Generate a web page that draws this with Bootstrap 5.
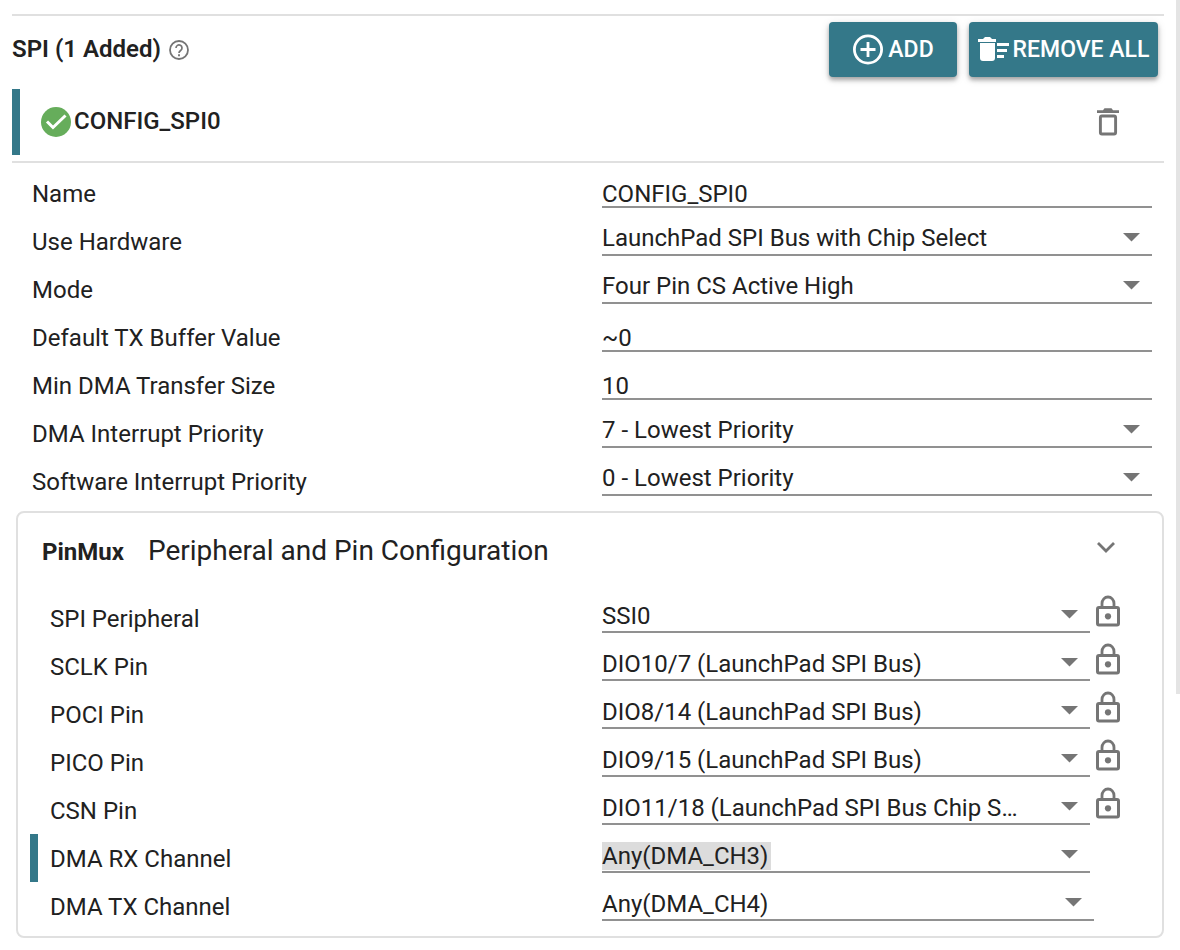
<!DOCTYPE html>
<html lang="en">
<head>
<meta charset="utf-8">
<meta name="viewport" content="width=device-width, initial-scale=1">
<title>SPI configuration</title>
<link href="https://cdn.jsdelivr.net/npm/bootstrap@5.3.0/dist/css/bootstrap.min.css" rel="stylesheet">
<style>
  :root { --teal: #347889; --rule: #e0e0e0; --line: #919191; --glyph: #757575; --ink: #212121; }
  body { font-family: Roboto, "Liberation Sans", sans-serif; font-size: 24px; line-height: 28px; color: var(--ink); background: #fff; }
  .page { padding: 14px 16px 12px 12px; }
  .scroll-thumb { width: 4px; height: 73vh; background: #e4e4e4; }
  .module-head { border-top: 2px solid var(--rule); padding: 6px 6px 12px 0; }
  .module-head h1 { font-size: 24px; line-height: 28px; font-weight: 600; padding-bottom: 2px; }
  .btn-teal { --bs-btn-color: #fff; --bs-btn-bg: var(--teal); --bs-btn-border-width: 0; --bs-btn-hover-color: #fff; --bs-btn-hover-bg: #2b6675; --bs-btn-active-bg: #2b6675; --bs-btn-active-color: #fff;
    --bs-btn-font-size: 23px; --bs-btn-font-weight: 500; --bs-btn-line-height: 28px; --bs-btn-border-radius: 4px; --bs-btn-padding-x: 6px;
    height: 55px; box-shadow: 0 3px 4px rgba(0,0,0,.3), 0 2px 10px rgba(0,0,0,.12); }
  .btn-add { width: 128px; }
  .btn-remove { width: 189px; }
  .head-actions { gap: 12px; }
  .icon-btn { background: none; border: 0; padding: 0; color: var(--glyph); }
  .icon-btn svg, .btn-teal svg { display: block; }
  .instance { border-bottom: 2px solid var(--rule); padding-bottom: 6px; }
  .instance-body { border-left: 8px solid var(--teal); height: 66px; padding: 0 44px 0 20px; }
  .instance h2 { font-size: 24px; line-height: 28px; font-weight: 500; padding: 0 0 2px 2px; }
  .settings { padding: 7px 12px 5px 20px; }
  .setting { min-height: 48px; }
  .value { padding-left: 10px; padding-bottom: 10px; }
  .field { width: 100%; border: 0; border-bottom: 2px solid var(--line); border-radius: 0; background-color: transparent; color: var(--ink); padding: 0; height: 26px; line-height: 24px; outline: 0; }
  select.field { appearance: none; height: 32px; line-height: 28px; padding: 0 64px 2px 0; text-overflow: ellipsis; white-space: nowrap; overflow: hidden;
    background: url("data:image/svg+xml,%3Csvg xmlns='http://www.w3.org/2000/svg' width='17' height='9'%3E%3Cpath d='M0 0h17L8.500 8.500z' fill='%23757575'/%3E%3C/svg%3E") no-repeat right 12px bottom 12px; }
  .pinmux { border: 2px solid var(--rule); border-radius: 8px; margin-left: 4px; padding: 0 0 6px 12px; }
  .pinmux-head { height: 81px; padding: 0 46px 6px 12px; }
  .pinmux-head h2 { font-size: 24px; line-height: 28px; font-weight: 700; }
  .pinmux-head p { font-size: 28px; line-height: 32px; }
  .pinmux .setting { border-left: 8px solid transparent; padding: 0 28px 0 12px; }
  .pinmux .setting.changed { border-left-color: var(--teal); }
  .pinmux label { padding-top: 2px; }
  .pinmux .value { padding-bottom: 9px; }
  .pinmux select.field { height: 31px; padding-bottom: 1px; }
  .lock-slot { width: 44px; padding-left: 6px; }
  .slot-narrow { width: 40px; }
  .changed .value { position: relative; }
  .picked { width: 169px; height: 28px; left: 10px; bottom: 12px; z-index: -1; background: #dcdcdc; }
</style>
</head>
<body>
<svg class="d-none" aria-hidden="true">
  <symbol id="lock" viewBox="0 0 24 32"><rect x="1.500" y="12.500" width="21" height="17.500" rx="1.500" fill="none" stroke="currentColor" stroke-width="3"/><path d="M6 12V8.500a6 6.500 0 0 1 12 0V12" fill="none" stroke="currentColor" stroke-width="2.800"/><circle cx="12" cy="21.300" r="3.100" fill="currentColor"/></symbol>
</svg>
<div class="scroll-thumb position-fixed top-0 end-0"></div>
<main class="page">
  <header class="module-head d-flex align-items-center">
    <h1 class="mb-0">SPI (1 Added)</h1>
    <button class="icon-btn ms-2" type="button" aria-label="Help">
      <svg width="20" height="20" viewBox="0 0 20 20" fill="none" stroke="currentColor"><circle cx="10" cy="10" r="9" stroke-width="1.800"/><path d="M7 8a3 3 0 1 1 4.600 2.500C10.500 11.300 10 11.800 10 13" stroke-width="1.700"/><path d="M10 14.300v1.900" stroke-width="1.900"/></svg>
    </button>
    <div class="head-actions d-flex ms-auto">
      <button class="btn btn-teal btn-add d-flex align-items-center justify-content-center" type="button">
        <svg class="me-1" width="32" height="32" viewBox="0 0 32 32" fill="none" stroke="#fff" stroke-width="2.800"><circle cx="16" cy="15.500" r="13.600"/><path d="M16 8v15M8.500 15.500h15"/></svg>ADD
      </button>
      <button class="btn btn-teal btn-remove d-flex align-items-center justify-content-center" type="button">
        <svg class="me-1" width="31" height="26" viewBox="0 0 31 26" fill="#fff"><path d="M0 2h5l2-2h5l2 2h4v3H0zM2 6h15v15q0 3-3 3H5q-3 0-3-3zM19 6h12v3H19zM19 12h10v3H19zM19 18h7v3h-7z"/></svg>REMOVE ALL
      </button>
    </div>
  </header>

  <section class="instance">
    <div class="instance-body d-flex align-items-center">
      <svg class="flex-shrink-0" width="32" height="32" viewBox="0 0 32 32"><circle cx="16" cy="16" r="15" fill="#66ad5b"/><path d="M7 15.500l6 6L25.500 9.500" fill="none" stroke="#fff" stroke-width="3"/></svg>
      <h2 class="mb-0">CONFIG_SPI0</h2>
      <button class="icon-btn ms-auto" type="button" aria-label="Remove CONFIG_SPI0">
        <svg width="24" height="28" viewBox="0 0 24 28"><path d="M1 2.300h6L8.500.3h7l1.500 2h6v2.700H1z" fill="currentColor"/><rect x="4.400" y="8" width="15.200" height="18" rx="1.500" fill="none" stroke="currentColor" stroke-width="2.900"/></svg>
      </button>
    </div>
  </section>

  <form>
    <div class="settings">
      <div class="setting row g-0"><label class="col-6 align-self-center" for="name">Name</label><div class="col-6 value d-flex align-items-end"><input class="field" id="name" type="text" value="CONFIG_SPI0"></div></div>
      <div class="setting row g-0"><label class="col-6 align-self-center" for="hw">Use Hardware</label><div class="col-6 value d-flex align-items-end"><select class="field" id="hw"><option>LaunchPad SPI Bus with Chip Select</option></select></div></div>
      <div class="setting row g-0"><label class="col-6 align-self-center" for="mode">Mode</label><div class="col-6 value d-flex align-items-end"><select class="field" id="mode"><option>Four Pin CS Active High</option></select></div></div>
      <div class="setting row g-0"><label class="col-6 align-self-center" for="txbuf">Default TX Buffer Value</label><div class="col-6 value d-flex align-items-end"><input class="field" id="txbuf" type="text" value="~0"></div></div>
      <div class="setting row g-0"><label class="col-6 align-self-center" for="mindma">Min DMA Transfer Size</label><div class="col-6 value d-flex align-items-end"><input class="field" id="mindma" type="text" value="10"></div></div>
      <div class="setting row g-0"><label class="col-6 align-self-center" for="dmaprio">DMA Interrupt Priority</label><div class="col-6 value d-flex align-items-end"><select class="field" id="dmaprio"><option>7 - Lowest Priority</option></select></div></div>
      <div class="setting row g-0"><label class="col-6 align-self-center" for="swprio">Software Interrupt Priority</label><div class="col-6 value d-flex align-items-end"><select class="field" id="swprio"><option>0 - Lowest Priority</option></select></div></div>
    </div>

    <section class="pinmux">
      <div class="pinmux-head d-flex align-items-center">
        <div class="d-flex align-items-baseline gap-4"><h2 class="mb-0">PinMux</h2><p class="mb-0">Peripheral and Pin Configuration</p></div>
        <button class="icon-btn ms-auto mb-2" type="button" aria-label="Collapse PinMux"><svg width="20" height="12" viewBox="0 0 20 12"><path d="M2 2l8 8 8-8" fill="none" stroke="currentColor" stroke-width="2.800"/></svg></button>
      </div>
      <div class="setting row g-0"><label class="col-6 align-self-center" for="periph">SPI Peripheral</label><div class="col-6 value d-flex align-items-end"><select class="field" id="periph"><option>SSI0</option></select><div class="lock-slot flex-shrink-0"><button class="icon-btn" type="button" aria-label="Lock SPI Peripheral"><svg width="24" height="32"><use href="#lock"/></svg></button></div></div></div>
      <div class="setting row g-0"><label class="col-6 align-self-center" for="sclk">SCLK Pin</label><div class="col-6 value d-flex align-items-end"><select class="field" id="sclk"><option>DIO10/7 (LaunchPad SPI Bus)</option></select><div class="lock-slot flex-shrink-0"><button class="icon-btn" type="button" aria-label="Lock SCLK Pin"><svg width="24" height="32"><use href="#lock"/></svg></button></div></div></div>
      <div class="setting row g-0"><label class="col-6 align-self-center" for="poci">POCI Pin</label><div class="col-6 value d-flex align-items-end"><select class="field" id="poci"><option>DIO8/14 (LaunchPad SPI Bus)</option></select><div class="lock-slot flex-shrink-0"><button class="icon-btn" type="button" aria-label="Lock POCI Pin"><svg width="24" height="32"><use href="#lock"/></svg></button></div></div></div>
      <div class="setting row g-0"><label class="col-6 align-self-center" for="pico">PICO Pin</label><div class="col-6 value d-flex align-items-end"><select class="field" id="pico"><option>DIO9/15 (LaunchPad SPI Bus)</option></select><div class="lock-slot flex-shrink-0"><button class="icon-btn" type="button" aria-label="Lock PICO Pin"><svg width="24" height="32"><use href="#lock"/></svg></button></div></div></div>
      <div class="setting row g-0"><label class="col-6 align-self-center" for="csn">CSN Pin</label><div class="col-6 value d-flex align-items-end"><select class="field" id="csn"><option>DIO11/18 (LaunchPad SPI Bus Chip Select)</option></select><div class="lock-slot flex-shrink-0"><button class="icon-btn" type="button" aria-label="Lock CSN Pin"><svg width="24" height="32"><use href="#lock"/></svg></button></div></div></div>
      <div class="setting changed row g-0"><label class="col-6 align-self-center" for="rx">DMA RX Channel</label><div class="col-6 value d-flex align-items-end"><span class="picked position-absolute"></span><select class="field" id="rx"><option>Any(DMA_CH3)</option></select><div class="lock-slot flex-shrink-0"></div></div></div>
      <div class="setting row g-0"><label class="col-6 align-self-center" for="tx">DMA TX Channel</label><div class="col-6 value d-flex align-items-end"><select class="field" id="tx"><option>Any(DMA_CH4)</option></select><div class="slot-narrow flex-shrink-0"></div></div></div>
    </section>
  </form>
</main>
<script src="https://cdn.jsdelivr.net/npm/bootstrap@5.3.0/dist/js/bootstrap.bundle.min.js"></script>
</body>
</html>
